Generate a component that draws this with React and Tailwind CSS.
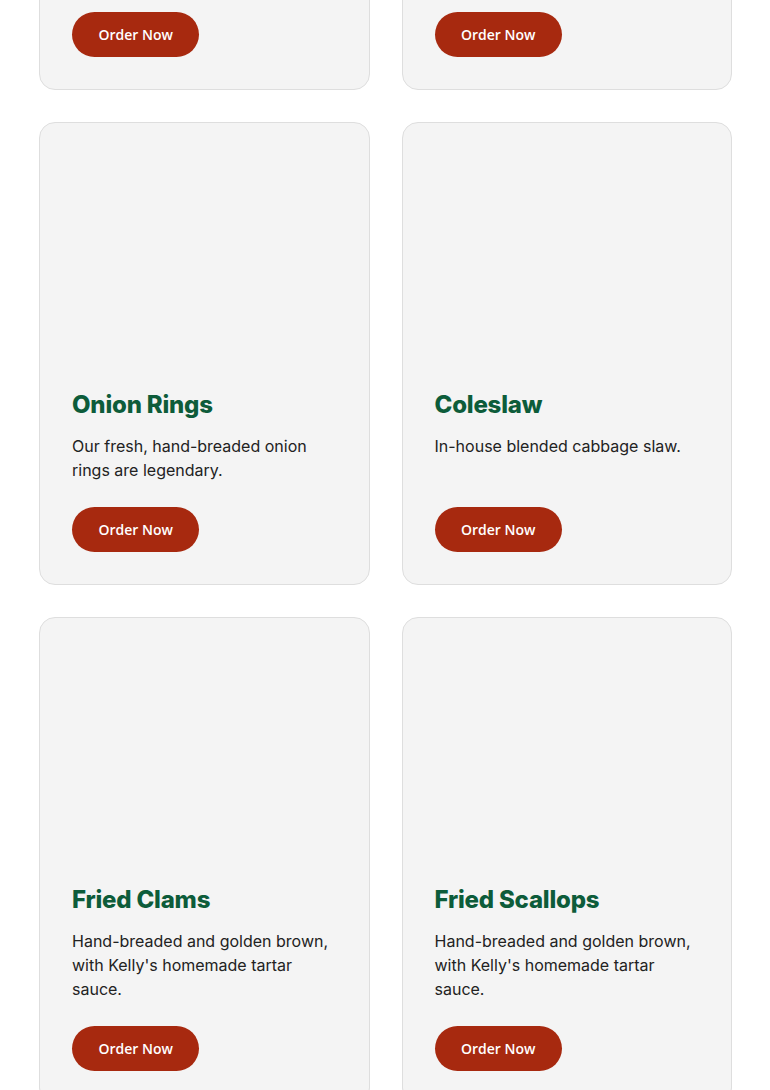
import React from 'react';

const ITEMS = [
    { name: 'French Fries', desc: 'Fresh-cut potatoes, fried golden and lightly salted.' },
    { name: 'Sweet Potato Fries', desc: 'Crispy sweet potato fries with a pinch of sea salt.' },
    { name: 'Onion Rings', desc: 'Our fresh, hand-breaded onion rings are legendary.' },
    { name: 'Coleslaw', desc: 'In-house blended cabbage slaw.' },
    { name: 'Fried Clams', desc: "Hand-breaded and golden brown, with Kelly's homemade tartar sauce." },
    { name: 'Fried Scallops', desc: "Hand-breaded and golden brown, with Kelly's homemade tartar sauce." }
];

function MenuCard({ name, desc }) {
    return (
        <div className="flex flex-col rounded-2xl border border-[#dedede] bg-[#f4f4f4] p-8">
            <div className="h-[207px] w-full" />
            <h3 className="mt-[27px] text-[24px] leading-8 font-extrabold tracking-[-0.2px] text-[#0d5c3a] font-['Inter',sans-serif]">
                {name}
            </h3>
            <p className="mt-[13px] text-[16px] leading-6 text-[#222] font-['Inter',sans-serif]">
                {desc}
            </p>
            <div className="mt-auto pt-[25px]">
                <button className="h-[45px] rounded-full bg-[#a7290f] px-[26.5px] text-[14px] font-semibold text-white font-['Open_Sans',sans-serif]">
                    Order Now
                </button>
            </div>
        </div>
    );
}

export default function App() {
    return (
        <div className="h-[1090px] overflow-hidden bg-white">
            <div className="-mt-[373px] grid grid-cols-2 gap-8 pl-[39px] pr-[38px]">
                {ITEMS.map(item => (
                    <MenuCard key={item.name} {...item} />
                ))}
            </div>
        </div>
    );
}
